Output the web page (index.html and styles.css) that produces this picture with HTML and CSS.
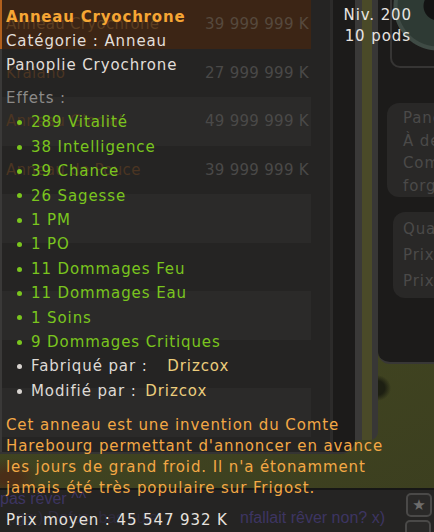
FILE: index.html
```html
<!DOCTYPE html>
<html lang="fr">
<head>
  <meta charset="UTF-8" />
  <meta name="viewport" content="width=device-width, initial-scale=1.0"/>
  <title>Anneau Cryochrone</title>
  <link rel="stylesheet" href="styles.css">
</head>
<body>
  <div class="screen">
    <!-- game interface behind the tooltip -->
    <div class="upper">
      <div class="market">
        <div class="list">
          <div class="row selected"><span class="name">Anneau Cryochrone</span><span class="price">39 999 999 K</span></div>
          <div class="row"><span class="name">Kralano</span><span class="price">27 999 999 K</span></div>
          <div class="row"><span class="name">Anneau Glacial</span><span class="price">49 999 999 K</span></div>
          <div class="row"><span class="name">Anneau de Pouce</span><span class="price">39 999 999 K</span></div>
          <div class="row"></div>
          <div class="row"></div>
          <div class="row"></div>
          <div class="row"></div>
          <div class="row"></div>
          <div class="row"></div>
        </div>
        <div class="side"></div>
      </div>
      <div class="rail"></div>
      <div class="right">
        <div class="portrait"></div>
        <div class="infobox first">Pano<br>À de<br>Com<br>forg</div>
        <div class="infobox second">Qua<br>Prix<br>Prix</div>
      </div>
    </div>
    <div class="chat">
      <p class="chat-line">pas rêver ^^</p>
      <p class="chat-line"><span class="faint">(:gg:) Dofus, bas sujet</span><span>nfallait rêver non? x)</span></p>
      <div class="chat-btn">&#9733;</div>
      <div class="chat-btn low"></div>
    </div>

    <!-- item tooltip -->
    <div class="tooltip">
      <div class="head">
        <div>
          <div class="title">Anneau Cryochrone</div>
          <div class="line">Catégorie : Anneau</div>
          <div class="line">Panoplie Cryochrone</div>
        </div>
        <div class="level">Niv. 200<br>10 pods</div>
      </div>
      <div class="effects-label">Effets :</div>
      <ul class="effects">
        <li>289 Vitalité</li>
        <li>38 Intelligence</li>
        <li>39 Chance</li>
        <li>26 Sagesse</li>
        <li>1 PM</li>
        <li>1 PO</li>
        <li>11 Dommages Feu</li>
        <li>11 Dommages Eau</li>
        <li>1 Soins</li>
        <li>9 Dommages Critiques</li>
        <li class="meta">Fabriqué par : <span class="crafter wide">Drizcox</span></li>
        <li class="meta">Modifié par : <span class="crafter">Drizcox</span></li>
      </ul>
      <p class="desc">Cet anneau est une invention du Comte<br>Harebourg permettant d'annoncer en avance<br>les jours de grand froid. Il n'a étonamment<br>jamais été très populaire sur Frigost.</p>
      <div class="avg">Prix moyen : 45 547 932 K</div>
    </div>
  </div>
</body>
</html>
```

FILE: styles.css
```css
body {
  margin: 0;
  background: #1d1c1b;
  font-family: "DejaVu Sans", Verdana, sans-serif;
}
.screen {
  position: relative;
  width: 434px;
  height: 532px;
  overflow: hidden;
  background:
    radial-gradient(ellipse 14px 13px at 377px 388px, #1d1f12 55%, transparent 100%),
    radial-gradient(ellipse 30px 20px at 10px 478px, #4a2e18 30%, transparent 100%),
    linear-gradient(160deg, #4a4f24, #3b3e1f);
}

/* background interface */
.upper {
  display: flex;
  height: 488px;
}
.market {
  display: flex;
  width: 355px;
  height: 452px;
  background: #1e1d1c;
  border-bottom: 2px solid #353433;
  border-bottom-right-radius: 14px;
  overflow: hidden;
}
.list {
  width: 309px;
  border-left: 2px solid #3a3938;
}
.row {
  display: flex;
  justify-content: space-between;
  align-items: center;
  height: 48.5px;
  padding: 0 2px 0 4px;
  font-size: 15px;
  letter-spacing: 0.3px;
  background: #252423;
}
.row:nth-child(odd) {
  background: #2b2a29;
}
.row.selected {
  background: #3c2515;
  border-left: 2px solid #b2601d;
  margin-left: -2px;
}
.name {
  color: #4b3522;
}
.selected .name {
  color: #5e3f22;
}
.price {
  color: #4a4948;
}
.selected .price {
  color: #56493d;
}
.side {
  flex: 1;
  background: linear-gradient(90deg, #252423 0 19px, #2c2b2a 19px 22px, #1c1b1a 22px);
}
.rail {
  width: 23px;
  height: 440px;
  background: linear-gradient(90deg, #3a3938 0 7px, #4a4a28 7px 17px, #383736 17px);
  border-bottom-right-radius: 8px;
}
.right {
  flex: 1;
  height: 362px;
  background: #1c1b1a;
  border-bottom: 2px solid #383736;
  border-bottom-left-radius: 12px;
  overflow: hidden;
}
.portrait {
  margin-left: 12px;
  height: 66px;
  border-left: 2px solid #363534;
  border-bottom: 2px solid #363534;
  border-bottom-left-radius: 10px;
  background:
    radial-gradient(circle at 46px 6px, #131313 0 14px, #2e3a34 15px 40px, #3f4b45 41px 44px, transparent 45px);
}
.infobox {
  background: #292827;
  border-radius: 12px 0 0 12px;
  color: #4b4a49;
  font-size: 15px;
  letter-spacing: 0.9px;
  white-space: nowrap;
  overflow: hidden;
}
.infobox.first {
  margin: 35px 0 0 9px;
  height: 90px;
  padding: 4px 0 0 16px;
  line-height: 22.5px;
}
.infobox.second {
  margin: 15px 0 0 15px;
  height: 82px;
  padding: 4px 0 0 10px;
  line-height: 26px;
}
.chat {
  position: relative;
  height: 42px;
  background: #252423;
  border-top: 2px solid #171716;
  font-family: "Liberation Sans", Arial, sans-serif;
  font-size: 16px;
  color: #3d3562;
}
.chat-line {
  margin: 0;
  line-height: 19px;
  white-space: nowrap;
}
.chat-line:first-child {
  margin-top: -1px;
}
.chat-line .faint {
  display: inline-block;
  width: 240px;
  padding-left: 6px;
  box-sizing: border-box;
  color: #2e2a3c;
}
.chat-btn {
  position: absolute;
  right: 2px;
  top: 3px;
  width: 22px;
  height: 20px;
  border: 2px solid #4a4948;
  border-radius: 5px;
  background: #2a2928;
  color: #6e6d6c;
  font-family: "DejaVu Sans", sans-serif;
  font-size: 15px;
  line-height: 20px;
  text-align: center;
}
.chat-btn.low {
  top: 30px;
  right: 3px;
  height: 20px;
}

/* tooltip */
.tooltip {
  position: absolute;
  inset: 0;
  padding: 5px 22px 0 6px;
  font-size: 15px;
  letter-spacing: 0.9px;
  color: #e2ded9;
}
.head {
  display: flex;
  justify-content: space-between;
}
.title {
  font-weight: bold;
  color: #f6a634;
  line-height: 24px;
  letter-spacing: 0.8px;
}
.line {
  line-height: 24px;
}
.level {
  margin-top: 0;
  text-align: center;
  line-height: 21px;
  color: #e8e4e0;
}
.effects-label {
  margin-top: 9px;
  line-height: 24.4px;
  color: #8c8a88;
}
.effects {
  list-style: none;
  margin: 0;
  padding: 0;
}
.effects li {
  display: flex;
  align-items: center;
  line-height: 24.4px;
  color: #7ac51e;
  white-space: pre;
}
.effects li::before {
  content: "";
  width: 5px;
  height: 5px;
  border-radius: 50%;
  background: #7ac51e;
  margin: 0 9px 0 11px;
}
.effects li.meta {
  color: #dedad5;
}
.effects li.meta::before {
  background: #d8d4d0;
}
.crafter {
  color: #eccd7c;
  margin-left: 3px;
}
.crafter.wide {
  margin-left: 14px;
}
.desc {
  margin: 12px 0 0;
  line-height: 21px;
  color: #f3a845;
  white-space: nowrap;
}
.avg {
  margin-top: 9px;
  line-height: 24px;
  color: #e6e2de;
}
```
